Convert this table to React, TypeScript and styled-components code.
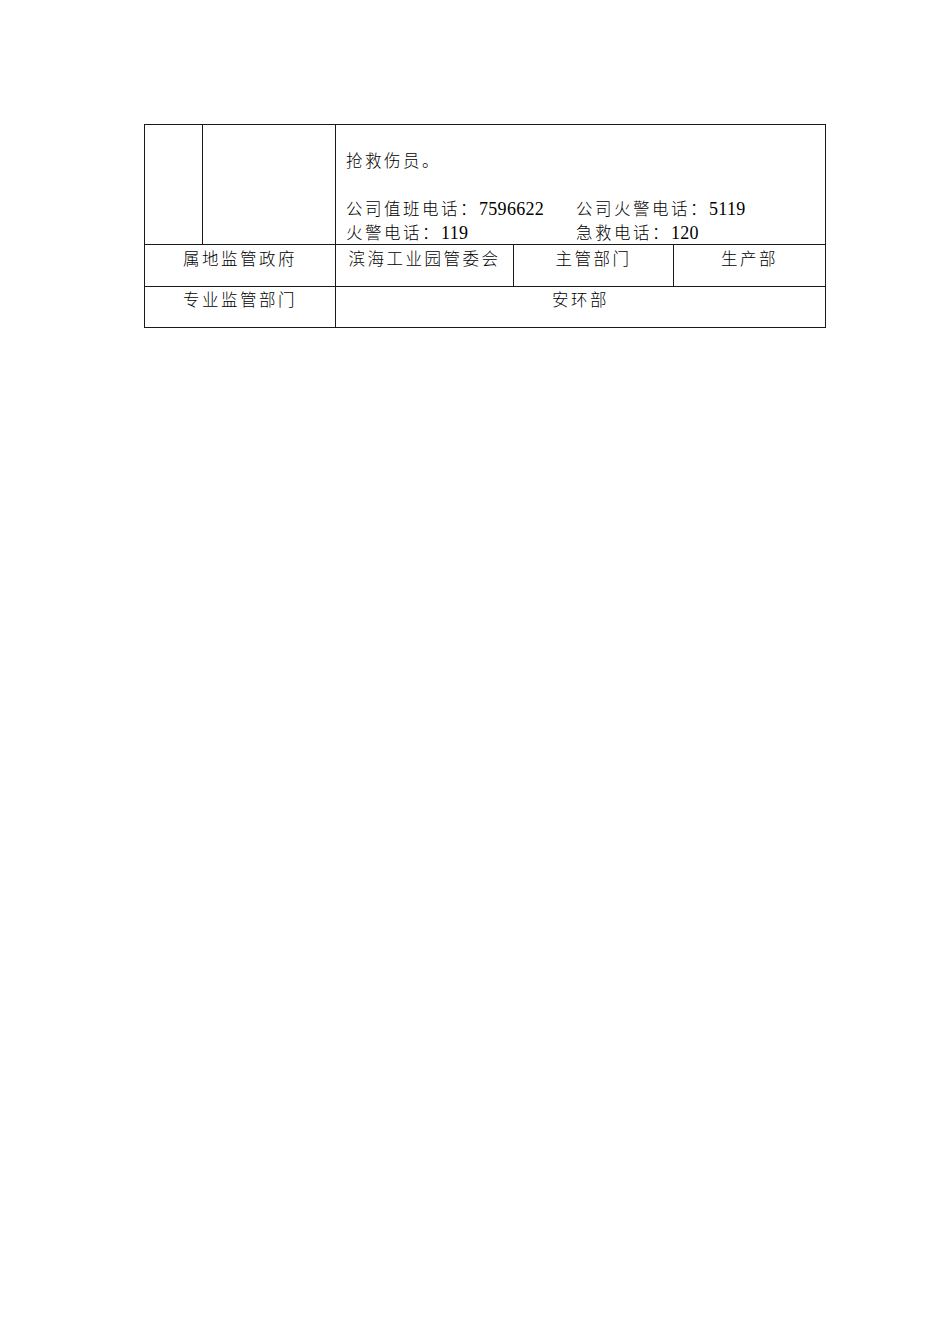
import React from "react";
import styled, { createGlobalStyle } from "styled-components";

const Global = createGlobalStyle`
  html, body { margin: 0; padding: 0; background: #fff; }
  body { font-family: "Noto Sans CJK SC", "Liberation Serif", serif; color: #000; }
`;

const Page = styled.div`
  width: 950px;
  min-height: 1344px;
  box-sizing: border-box;
  padding: 124px 0 0 144px;
  background: #fff;
`;

const Table = styled.table`
  border-collapse: collapse;
  table-layout: fixed;
  width: 682px;
`;

const Cell = styled.td<{ $align?: "left" | "center"; $h: number; $pt?: number }>`
  border: 1px solid #1a1a1a;
  padding: ${(p) => p.$pt ?? 0}px 0 0 ${(p) => (p.$align === "left" ? 10 : 0)}px;
  height: ${(p) => p.$h}px;
  box-sizing: border-box;
  vertical-align: top;
  text-align: ${(p) => p.$align ?? "center"};
  font-size: 16.5px;
  line-height: 24px;
  letter-spacing: 2.5px;
  white-space: nowrap;
  font-family: "Noto Sans CJK SC", "Liberation Serif", serif;
  font-weight: 300;
`;

const Num = styled.span`
  font-family: "Liberation Serif", serif;
  font-size: 18px;
  letter-spacing: 0.3px;
  font-weight: 400;
`;

const Line = styled.div`
  height: 24px;
`;

const Tab = styled.span`
  display: inline-block;
  width: 230px;
`;

export default function App() {
  return (
    <>
      <Global />
      <Page>
        <Table>
          <colgroup>
            <col style={{ width: 58 }} />
            <col style={{ width: 133 }} />
            <col style={{ width: 178 }} />
            <col style={{ width: 160 }} />
            <col style={{ width: 152 }} />
          </colgroup>
          <tbody>
            <tr>
              <Cell $h={119} />
              <Cell $h={119} />
              <Cell colSpan={3} $align="left" $h={119} $pt={23}>
                <Line>抢救伤员。</Line>
                <Line />
                <Line>
                  <Tab>
                    公司值班电话：<Num>7596622</Num>
                  </Tab>
                  公司火警电话：<Num>5119</Num>
                </Line>
                <Line>
                  <Tab>
                    火警电话：<Num>119</Num>
                  </Tab>
                  急救电话：<Num>120</Num>
                </Line>
              </Cell>
            </tr>
            <tr>
              <Cell colSpan={2} $h={42} $pt={1}>属地监管政府</Cell>
              <Cell $h={42} $pt={1}>滨海工业园管委会</Cell>
              <Cell $h={42} $pt={1}>主管部门</Cell>
              <Cell $h={42} $pt={1}>生产部</Cell>
            </tr>
            <tr>
              <Cell colSpan={2} $h={41}>专业监管部门</Cell>
              <Cell colSpan={3} $h={41}>安环部</Cell>
            </tr>
          </tbody>
        </Table>
      </Page>
    </>
  );
}
